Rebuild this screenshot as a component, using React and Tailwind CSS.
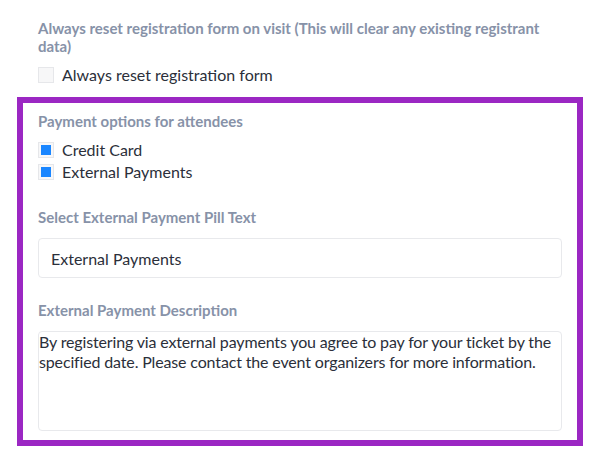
import { useState } from "react";

const font = { fontFamily: "Lato, 'Noto Sans', sans-serif" };

const Check = ({ checked, label, onToggle }) => (
  <label className="flex items-center h-[22px] cursor-pointer" onClick={onToggle}>
    <span className="w-[16px] h-[16px] border border-[#e6e7ea] bg-[#f7f7f8] flex items-center justify-center">
      {checked && <span className="w-[10px] h-[10px] bg-[#1a86ff]" />}
    </span>
    <span className="ml-[8px] text-[16px] text-[#2b2f3a]">{label}</span>
  </label>
);

export default function App() {
  const [reset, setReset] = useState(false);
  const [card, setCard] = useState(true);
  const [external, setExternal] = useState(true);

  return (
    <div className="w-[600px] h-[453px] bg-white px-[17px] pt-[19px]" style={font}>
      {/* Reset section */}
      <div className="px-[21px]">
        <p className="max-w-[505px] text-[15px] leading-[18px] font-bold text-[#8792a8]">
          Always reset registration form on visit (This will clear any existing registrant data)
        </p>
        <div className="mt-[9px]">
          <Check checked={reset} label="Always reset registration form" onToggle={() => setReset(!reset)} />
        </div>
      </div>

      {/* Payment section (highlighted) */}
      <div className="mt-[11px] border-[6px] border-[#9b27c3] px-[15px] pt-[9px] pb-[9px]">
        <p className="text-[15px] leading-[18px] font-bold text-[#8792a8]">
          Payment options for attendees
        </p>
        <div className="mt-[9px] flex flex-col">
          <Check checked={card} label="Credit Card" onToggle={() => setCard(!card)} />
          <Check checked={external} label="External Payments" onToggle={() => setExternal(!external)} />
        </div>

        <p className="mt-[25px] text-[15px] leading-[18px] font-bold text-[#8792a8]">
          Select External Payment Pill Text
        </p>
        <input
          className="mt-[12px] w-full h-[40px] border border-[#e8e9ec] rounded-[4px] px-[12px] text-[16px] text-[#2b2f3a] outline-none"
          defaultValue="External Payments"
        />

        <p className="mt-[23px] text-[15px] leading-[18px] font-bold text-[#8792a8]">
          External Payment Description
        </p>
        <textarea
          className="mt-[12px] block w-full h-[100px] border border-[#e8e9ec] rounded-[4px] px-0 py-0 text-[16px] leading-[20px] tracking-[-0.15px] text-[#2b2f3a] resize-none outline-none"
          defaultValue="By registering via external payments you agree to pay for your ticket by the specified date. Please contact the event organizers for more information."
        />
      </div>
    </div>
  );
}
